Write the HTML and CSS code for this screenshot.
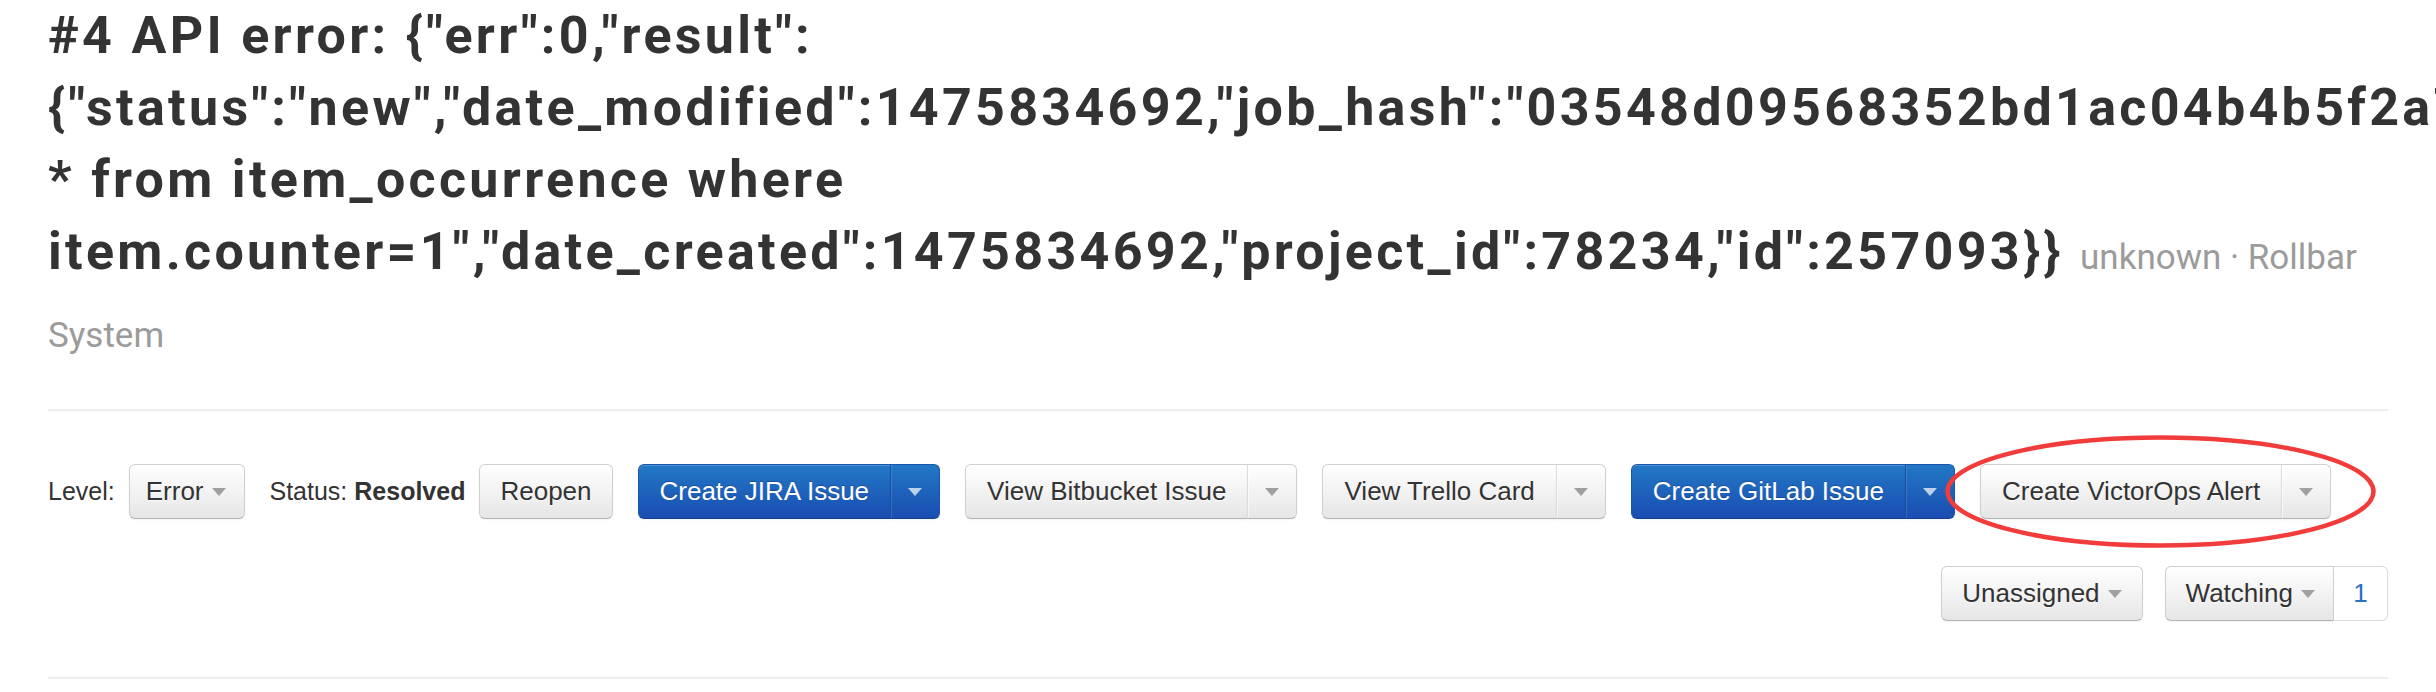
FILE: index.html
```html
<!DOCTYPE html>
<html lang="en">
<head>
<meta charset="utf-8">
<title>Item #4</title>
<link rel="stylesheet" href="styles.css">
</head>
<body>
<div class="page">
  <h1 class="title">#4 API error: {"err":0,"result":{"status":"new","date_modified":1475834692,"job_hash":"03548d09568352bd1ac04b4b5f2a7e61","query":"select * from item_occurrence where item.counter=1","date_created":1475834692,"project_id":78234,"id":257093}} <small class="meta">unknown · Rollbar System</small></h1>
  <hr class="rule rule-top">
  <div class="actions">
    <div class="toolbar">
      <div class="group">
        <span class="label">Level:</span>
        <button class="btn btn-level">Error <span class="caret"></span></button>
      </div>
      <div class="group">
        <span class="label">Status: <b>Resolved</b></span>
        <button class="btn">Reopen</button>
      </div>
      <div class="split primary">
        <button class="btn btn-main">Create JIRA Issue</button>
        <button class="btn btn-toggle"><span class="caret"></span></button>
      </div>
      <div class="split">
        <button class="btn btn-main">View Bitbucket Issue</button>
        <button class="btn btn-toggle"><span class="caret"></span></button>
      </div>
      <div class="split">
        <button class="btn btn-main">View Trello Card</button>
        <button class="btn btn-toggle"><span class="caret"></span></button>
      </div>
      <div class="split primary">
        <button class="btn btn-main">Create GitLab Issue</button>
        <button class="btn btn-toggle"><span class="caret"></span></button>
      </div>
      <div class="split annotated">
        <button class="btn btn-main">Create VictorOps Alert</button>
        <button class="btn btn-toggle"><span class="caret"></span></button>
        <svg class="circle" width="433" height="113" viewBox="0 0 433 113" aria-hidden="true">
          <ellipse cx="216.5" cy="56.5" rx="213" ry="54" fill="none" stroke="#f23c3c" stroke-width="4.5"/>
        </svg>
      </div>
    </div>
    <div class="toolbar-right">
      <button class="btn">Unassigned <span class="caret"></span></button>
      <div class="watch">
        <button class="btn btn-watch">Watching <span class="caret"></span></button>
        <span class="count">1</span>
      </div>
    </div>
  </div>
  <hr class="rule">
</div>
</body>
</html>
```

FILE: styles.css
```css
html {
  overflow-x: hidden;
}

body {
  margin: 0;
  background: #fff;
  font-family: "Liberation Sans", Arial, sans-serif;
  color: #333;
}

.page {
  padding: 0 48px;
}

.title {
  margin: 0;
  font-family: Roboto, "Noto Sans", sans-serif;
  font-weight: 700;
  font-size: 52px;
  line-height: 72px;
  color: #333;
  letter-spacing: 3.3px;
}

.meta {
  font-family: Roboto, "Noto Sans", sans-serif;
  font-weight: 400;
  font-size: 35px;
  letter-spacing: 0;
  color: #9b9b9b;
}

.rule {
  margin: 0;
  border: 0;
  border-top: 2px solid #eee;
  height: 0;
}

.rule-top {
  margin-top: 37px;
}

.actions {
  margin-top: 53px;
  display: flex;
  flex-direction: column;
  gap: 47px;
  margin-bottom: 56px;
}

.toolbar {
  display: flex;
  align-items: center;
  gap: 25px;
}

.group {
  display: flex;
  align-items: center;
  gap: 14px;
}

.label {
  font-size: 25px;
  color: #333;
}

.label b {
  font-weight: 700;
}

.btn {
  display: inline-flex;
  align-items: center;
  justify-content: center;
  box-sizing: border-box;
  height: 55px;
  margin: 0;
  padding: 0 20px;
  font-family: "Liberation Sans", Arial, sans-serif;
  font-size: 26px;
  color: #333;
  text-shadow: 0 1px 1px rgba(255, 255, 255, 0.75);
  background: linear-gradient(#ffffff, #e6e6e6);
  border: 1px solid #cfcfcf;
  border-bottom-color: #b3b3b3;
  border-radius: 6px;
  box-shadow: inset 0 1px 0 rgba(255, 255, 255, 0.2), 0 1px 2px rgba(0, 0, 0, 0.05);
  cursor: pointer;
}

.btn-level {
  padding: 0 18px 0 16px;
}

.caret {
  display: inline-block;
  width: 0;
  height: 0;
  margin-left: 8px;
  border-top: 8px solid #a0a0a0;
  border-left: 7.5px solid transparent;
  border-right: 7.5px solid transparent;
}

.split {
  display: flex;
}

.split .btn-main {
  padding: 0 21px;
  border-radius: 6px 0 0 6px;
}

.split .btn-toggle {
  width: 50px;
  padding: 0;
  border-left: 1px solid #dcdcdc;
  border-radius: 0 6px 6px 0;
  margin-left: -1px;
  box-shadow: inset 1px 0 0 rgba(255, 255, 255, 0.6), 0 1px 2px rgba(0, 0, 0, 0.05);
}

.split .btn-toggle .caret {
  margin-left: 0;
}

.primary .btn {
  color: #fff;
  text-shadow: 0 -1px 0 rgba(0, 0, 0, 0.25);
  background: linear-gradient(#2278c5, #1a4db2);
  border-color: #1b55ad #1b55ad #163f8f;
}

.primary .btn-toggle {
  border-left-color: #1a4f9e;
  box-shadow: inset 1px 0 0 rgba(255, 255, 255, 0.12), 0 1px 2px rgba(0, 0, 0, 0.05);
}

.primary .caret {
  border-top-color: rgba(255, 255, 255, 0.7);
}

.annotated {
  position: relative;
}

.circle {
  position: absolute;
  left: -36px;
  top: -29px;
  pointer-events: none;
}

.toolbar-right {
  display: flex;
  justify-content: flex-end;
  align-items: center;
  gap: 22px;
}

.watch {
  display: flex;
}

.btn-watch {
  border-radius: 6px 0 0 6px;
  padding: 0 18px 0 20px;
}

.count {
  box-sizing: border-box;
  height: 55px;
  width: 54px;
  display: flex;
  align-items: center;
  justify-content: center;
  font-size: 26px;
  color: #2a72c0;
  background: #fff;
  border: 1px solid #dadada;
  border-left: 0;
  border-radius: 0 6px 6px 0;
}
```
